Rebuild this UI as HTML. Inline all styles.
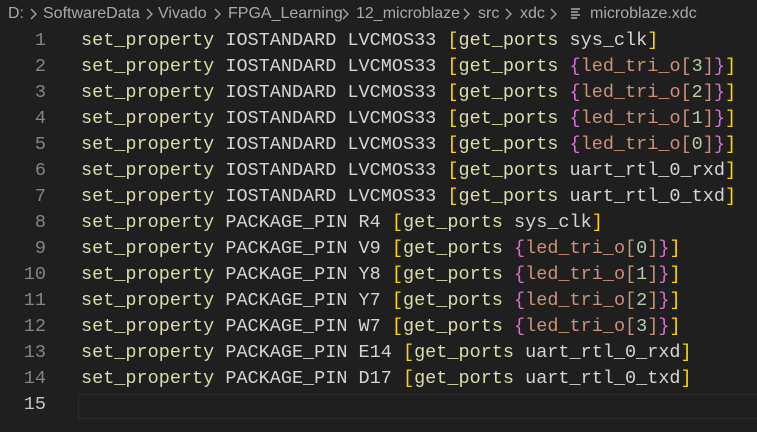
<!DOCTYPE html>
<html><head><meta charset="utf-8"><style>
html,body{margin:0;padding:0;background:#1f1f1f;width:757px;height:432px;overflow:hidden}
.bc{position:absolute;top:5px;font:16px "Liberation Sans",sans-serif;color:#a9a9a9;white-space:pre}
.sp{position:absolute;top:8px;width:7px;height:12px}
.ln{position:absolute;left:0;width:46px;text-align:right;font:18.5px "Liberation Mono",monospace;color:#858585;line-height:26px}
.cd{position:absolute;left:81px;font:18.5px "Liberation Mono",monospace;color:#d4d4d4;line-height:26px;white-space:pre}
.f{color:#dcdcaa}.b{color:#ffd700}.m{color:#da70d6}.o{color:#ce9178}.n{color:#b5cea8}
.cur{position:absolute;left:78px;top:394px;width:690px;height:25px;border:1px solid #2c2c2c;box-sizing:border-box}
</style></head><body>
<div class="bc" style="left:8px">D:</div>
<svg class="sp" style="left:30px" viewBox="0 0 7 12"><path d="M1 1L6 6L1 11" fill="none" stroke="#a9a9a9" stroke-width="1.3"/></svg>
<div class="bc" style="left:43px">SoftwareData</div>
<svg class="sp" style="left:146px" viewBox="0 0 7 12"><path d="M1 1L6 6L1 11" fill="none" stroke="#a9a9a9" stroke-width="1.3"/></svg>
<div class="bc" style="left:158px">Vivado</div>
<svg class="sp" style="left:214px" viewBox="0 0 7 12"><path d="M1 1L6 6L1 11" fill="none" stroke="#a9a9a9" stroke-width="1.3"/></svg>
<div class="bc" style="left:228px">FPGA_Learning</div>
<svg class="sp" style="left:342px" viewBox="0 0 7 12"><path d="M1 1L6 6L1 11" fill="none" stroke="#a9a9a9" stroke-width="1.3"/></svg>
<div class="bc" style="left:356px">12_microblaze</div>
<svg class="sp" style="left:463px" viewBox="0 0 7 12"><path d="M1 1L6 6L1 11" fill="none" stroke="#a9a9a9" stroke-width="1.3"/></svg>
<div class="bc" style="left:478px">src</div>
<svg class="sp" style="left:505px" viewBox="0 0 7 12"><path d="M1 1L6 6L1 11" fill="none" stroke="#a9a9a9" stroke-width="1.3"/></svg>
<div class="bc" style="left:520px">xdc</div>
<svg class="sp" style="left:550px" viewBox="0 0 7 12"><path d="M1 1L6 6L1 11" fill="none" stroke="#a9a9a9" stroke-width="1.3"/></svg>
<svg style="position:absolute;left:571px;top:8px" width="10" height="11" viewBox="0 0 10 11"><path d="M0 1H9M0 4H7M0 7H9M0 10H6" stroke="#c5c5c5" stroke-width="1.3"/></svg>
<div class="bc" style="left:590px">microblaze.xdc</div>
<div class="cur"></div>
<div class="ln" style="top:28px">1<br>2<br>3<br>4<br>5<br>6<br>7<br>8<br>9<br>10<br>11<br>12<br>13<br>14<br><span style="color:#c6c6c6">15</span></div>
<div class="cd" style="top:28px"><span class="f">set_property</span> IOSTANDARD LVCMOS33 <span class="b">[</span><span class="f">get_ports</span> sys_clk<span class="b">]</span>
<span class="f">set_property</span> IOSTANDARD LVCMOS33 <span class="b">[</span><span class="f">get_ports</span> <span class="m">{</span><span class="o">led_tri_o[</span><span class="n">3</span><span class="o">]</span><span class="m">}</span><span class="b">]</span>
<span class="f">set_property</span> IOSTANDARD LVCMOS33 <span class="b">[</span><span class="f">get_ports</span> <span class="m">{</span><span class="o">led_tri_o[</span><span class="n">2</span><span class="o">]</span><span class="m">}</span><span class="b">]</span>
<span class="f">set_property</span> IOSTANDARD LVCMOS33 <span class="b">[</span><span class="f">get_ports</span> <span class="m">{</span><span class="o">led_tri_o[</span><span class="n">1</span><span class="o">]</span><span class="m">}</span><span class="b">]</span>
<span class="f">set_property</span> IOSTANDARD LVCMOS33 <span class="b">[</span><span class="f">get_ports</span> <span class="m">{</span><span class="o">led_tri_o[</span><span class="n">0</span><span class="o">]</span><span class="m">}</span><span class="b">]</span>
<span class="f">set_property</span> IOSTANDARD LVCMOS33 <span class="b">[</span><span class="f">get_ports</span> uart_rtl_0_rxd<span class="b">]</span>
<span class="f">set_property</span> IOSTANDARD LVCMOS33 <span class="b">[</span><span class="f">get_ports</span> uart_rtl_0_txd<span class="b">]</span>
<span class="f">set_property</span> PACKAGE_PIN R4 <span class="b">[</span><span class="f">get_ports</span> sys_clk<span class="b">]</span>
<span class="f">set_property</span> PACKAGE_PIN V9 <span class="b">[</span><span class="f">get_ports</span> <span class="m">{</span><span class="o">led_tri_o[</span><span class="n">0</span><span class="o">]</span><span class="m">}</span><span class="b">]</span>
<span class="f">set_property</span> PACKAGE_PIN Y8 <span class="b">[</span><span class="f">get_ports</span> <span class="m">{</span><span class="o">led_tri_o[</span><span class="n">1</span><span class="o">]</span><span class="m">}</span><span class="b">]</span>
<span class="f">set_property</span> PACKAGE_PIN Y7 <span class="b">[</span><span class="f">get_ports</span> <span class="m">{</span><span class="o">led_tri_o[</span><span class="n">2</span><span class="o">]</span><span class="m">}</span><span class="b">]</span>
<span class="f">set_property</span> PACKAGE_PIN W7 <span class="b">[</span><span class="f">get_ports</span> <span class="m">{</span><span class="o">led_tri_o[</span><span class="n">3</span><span class="o">]</span><span class="m">}</span><span class="b">]</span>
<span class="f">set_property</span> PACKAGE_PIN E14 <span class="b">[</span><span class="f">get_ports</span> uart_rtl_0_rxd<span class="b">]</span>
<span class="f">set_property</span> PACKAGE_PIN D17 <span class="b">[</span><span class="f">get_ports</span> uart_rtl_0_txd<span class="b">]</span>
</div>
</body></html>
